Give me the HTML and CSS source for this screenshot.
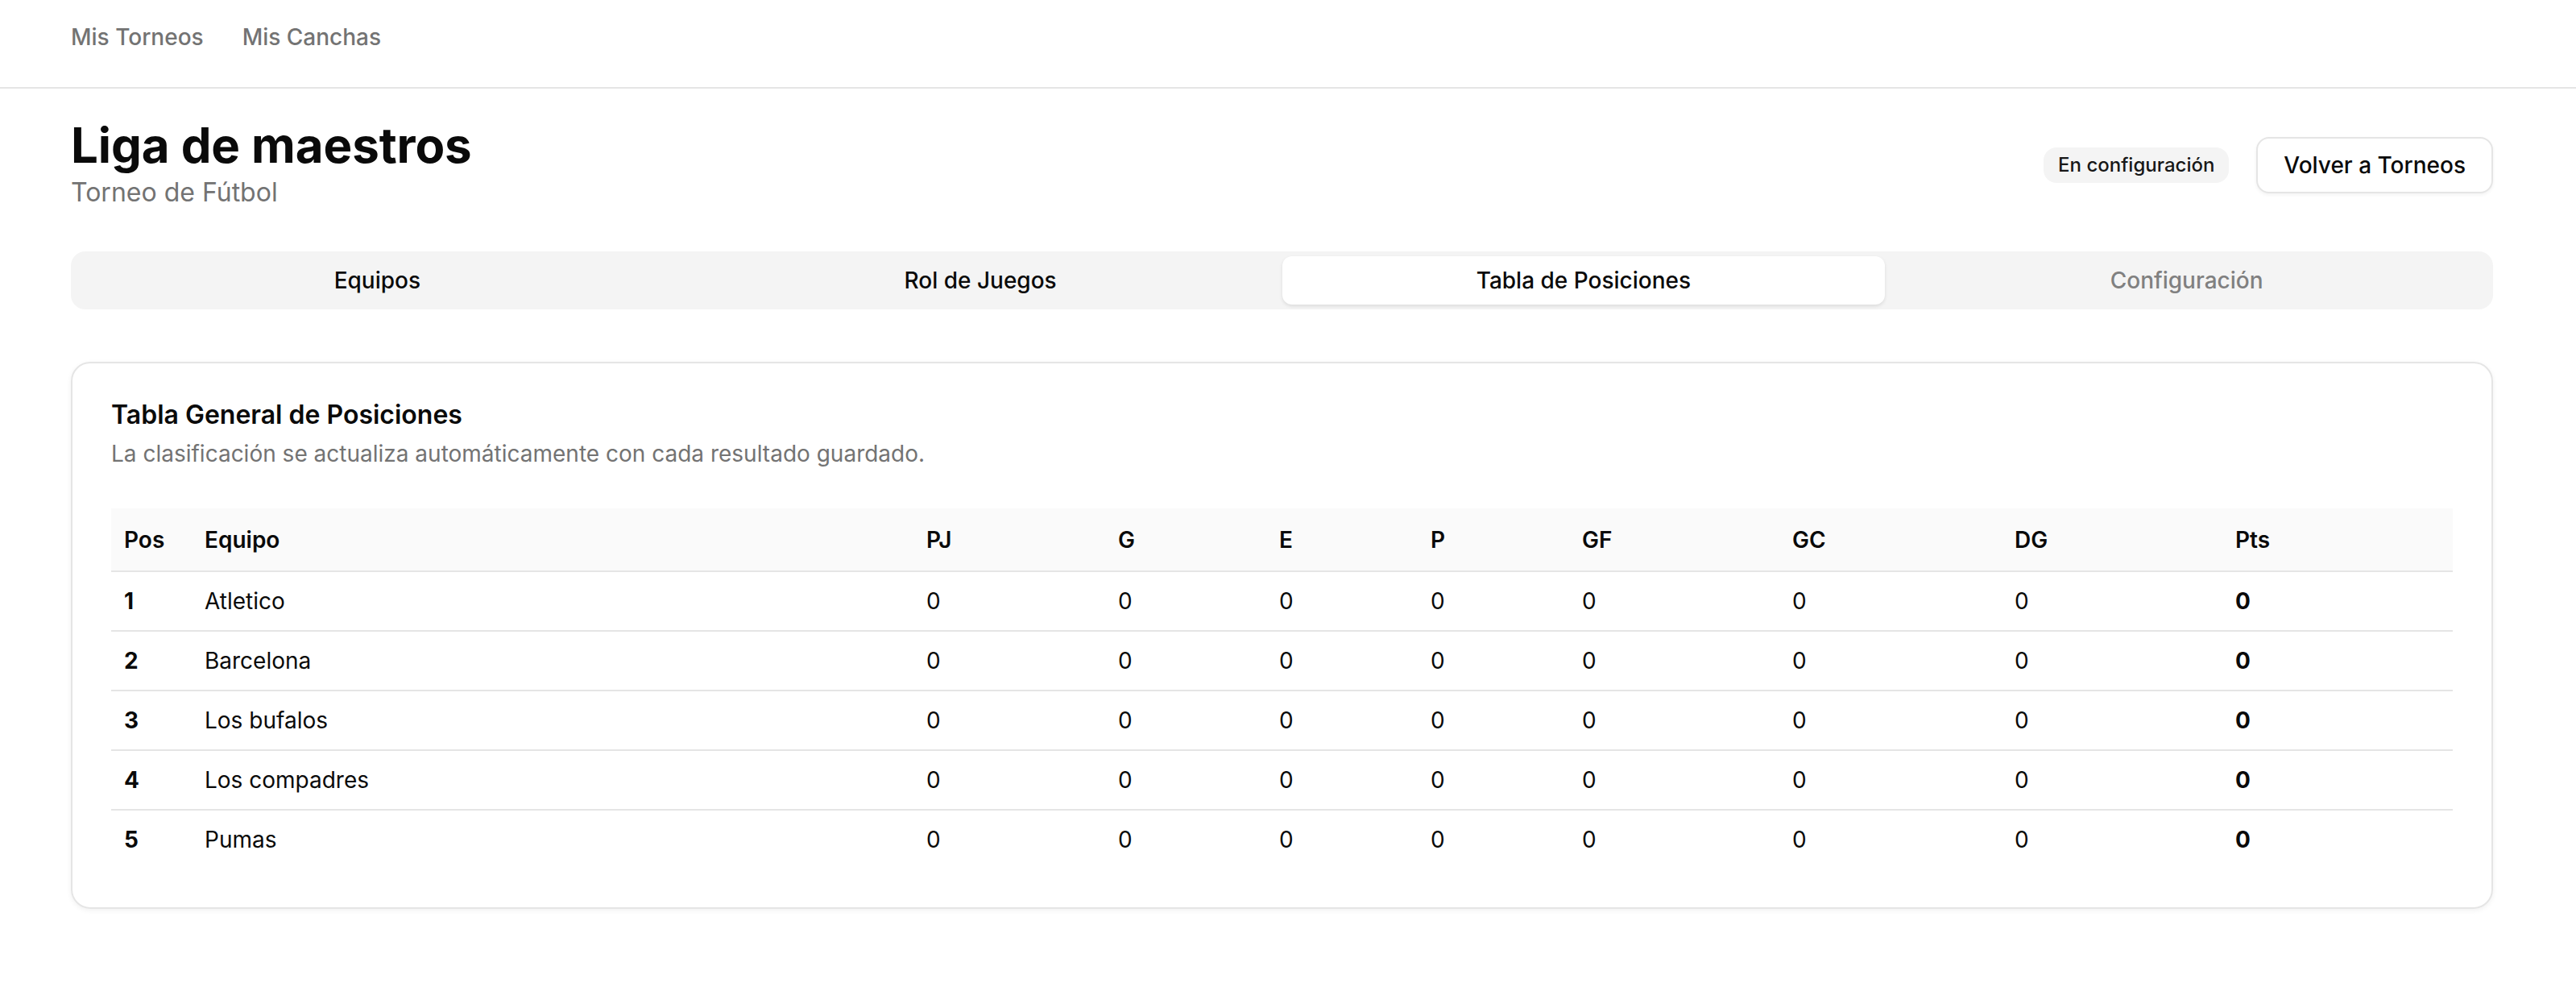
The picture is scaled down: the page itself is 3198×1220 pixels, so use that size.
FILE: index.html
```html
<!DOCTYPE html>
<html lang="es">
<head>
    <meta charset="UTF-8">
    <meta name="viewport" content="width=device-width, initial-scale=1.0">
    <title>Liga de maestros</title>
    <link rel="stylesheet" href="styles.css">
</head>
<body>

    <header class="topbar">
        <nav class="nav">
            <a href="#" class="nav-link">Mis Torneos</a>
            <a href="#" class="nav-link">Mis Canchas</a>
        </nav>
    </header>

    <main class="page">
        <div class="page-head">
            <div>
                <h1 class="title">Liga de maestros</h1>
                <p class="subtitle">Torneo de Fútbol</p>
            </div>
            <div class="head-actions">
                <span class="badge">En configuración</span>
                <button class="btn-outline">Volver a Torneos</button>
            </div>
        </div>

        <div class="tabs">
            <button class="tab">Equipos</button>
            <button class="tab">Rol de Juegos</button>
            <button class="tab active">Tabla de Posiciones</button>
            <button class="tab disabled">Configuración</button>
        </div>

        <section class="card">
            <div class="card-header">
                <h3 class="card-title">Tabla General de Posiciones</h3>
                <p class="card-desc">La clasificación se actualiza automáticamente con cada resultado guardado.</p>
            </div>

            <table class="standings">
                <colgroup>
                    <col class="c-pos">
                    <col class="c-team">
                    <col class="c-pj">
                    <col class="c-g">
                    <col class="c-e">
                    <col class="c-p">
                    <col class="c-gf">
                    <col class="c-gc">
                    <col class="c-dg">
                    <col>
                </colgroup>
                <thead>
                    <tr>
                        <th>Pos</th>
                        <th>Equipo</th>
                        <th>PJ</th>
                        <th>G</th>
                        <th>E</th>
                        <th>P</th>
                        <th>GF</th>
                        <th>GC</th>
                        <th>DG</th>
                        <th>Pts</th>
                    </tr>
                </thead>
                <tbody>
                    <tr>
                        <td class="strong">1</td><td>Atletico</td>
                        <td>0</td><td>0</td><td>0</td><td>0</td><td>0</td><td>0</td><td>0</td>
                        <td class="strong">0</td>
                    </tr>
                    <tr>
                        <td class="strong">2</td><td>Barcelona</td>
                        <td>0</td><td>0</td><td>0</td><td>0</td><td>0</td><td>0</td><td>0</td>
                        <td class="strong">0</td>
                    </tr>
                    <tr>
                        <td class="strong">3</td><td>Los bufalos</td>
                        <td>0</td><td>0</td><td>0</td><td>0</td><td>0</td><td>0</td><td>0</td>
                        <td class="strong">0</td>
                    </tr>
                    <tr>
                        <td class="strong">4</td><td>Los compadres</td>
                        <td>0</td><td>0</td><td>0</td><td>0</td><td>0</td><td>0</td><td>0</td>
                        <td class="strong">0</td>
                    </tr>
                    <tr>
                        <td class="strong">5</td><td>Pumas</td>
                        <td>0</td><td>0</td><td>0</td><td>0</td><td>0</td><td>0</td><td>0</td>
                        <td class="strong">0</td>
                    </tr>
                </tbody>
            </table>
        </section>
    </main>

</body>
</html>
```

FILE: styles.css
```css
* {
    box-sizing: border-box;
    font-family: Inter, "Noto Sans", Arial, sans-serif;
}
body {
    margin: 0;
    background: #fff;
    color: #0a0a0a;
}
.topbar {
    height: 110px;
    padding: 26px 103px 0 88px;
    border-bottom: 2px solid #e5e5e5;
}
.nav {
    display: flex;
    gap: 48px;
}
.nav-link {
    font-size: 28px;
    line-height: 40px;
    font-weight: 500;
    color: #737373;
    text-decoration: none;
}
.page {
    padding: 34px 103px 40px 88px;
}
.page-head {
    display: flex;
    justify-content: space-between;
    align-items: center;
}
.title {
    margin: 0;
    font-size: 60px;
    line-height: 72px;
    font-weight: 700;
    letter-spacing: -0.1px;
}
.subtitle {
    margin: 0;
    font-size: 32px;
    line-height: 46px;
    color: #737373;
}
.head-actions {
    display: flex;
    align-items: center;
    gap: 34px;
    padding-top: 4px;
}
.badge {
    background: #f4f4f4;
    border-radius: 16px;
    padding: 6px 18px;
    font-size: 24px;
    line-height: 32px;
    font-weight: 500;
    color: #171717;
}
.btn-outline {
    background: #fff;
    border: 2px solid #e5e5e5;
    border-radius: 16px;
    padding: 13px 32px;
    font-size: 28px;
    line-height: 40px;
    font-weight: 500;
    color: #0a0a0a;
    box-shadow: 0 2px 4px rgba(0, 0, 0, 0.05);
    cursor: pointer;
}
.tabs {
    display: grid;
    grid-template-columns: repeat(4, 1fr);
    margin-top: 50px;
    padding: 6px;
    height: 72px;
    background: #f4f4f4;
    border-radius: 18px;
}
.tab {
    border: none;
    background: none;
    border-radius: 12px;
    font-size: 28px;
    line-height: 40px;
    font-weight: 500;
    color: #0a0a0a;
    cursor: pointer;
}
.tab.active {
    background: #fff;
    box-shadow: 0 2px 4px rgba(0, 0, 0, 0.1);
}
.tab.disabled {
    color: #808080;
}
.card {
    margin-top: 65px;
    border: 2px solid #e5e5e5;
    border-radius: 24px;
    box-shadow: 0 2px 6px rgba(0, 0, 0, 0.06);
    padding: 0 48px 48px;
}
.card-header {
    padding: 48px 0;
}
.card-title {
    margin: 0;
    font-size: 32px;
    line-height: 32px;
    font-weight: 600;
}
.card-desc {
    margin: 12px 0 0;
    font-size: 28px;
    line-height: 40px;
    color: #737373;
}
.standings {
    width: 100%;
    table-layout: fixed;
    border-collapse: collapse;
    font-size: 28px;
    line-height: 40px;
}
.c-pos { width: 100px; }
.c-team { width: 896px; }
.c-pj { width: 238px; }
.c-g { width: 200px; }
.c-e { width: 188px; }
.c-p { width: 188px; }
.c-gf { width: 261px; }
.c-gc { width: 276px; }
.c-dg { width: 274px; }
.standings thead tr {
    background: #fafafa;
}
.standings th {
    height: 78px;
    padding: 0 16px;
    text-align: left;
    font-weight: 600;
    color: #0a0a0a;
}
.standings tr {
    border-bottom: 2px solid #e5e5e5;
}
.standings tbody tr:last-child {
    border-bottom: none;
}
.standings td {
    padding: 16px;
}
.strong {
    font-weight: 700;
}
```
